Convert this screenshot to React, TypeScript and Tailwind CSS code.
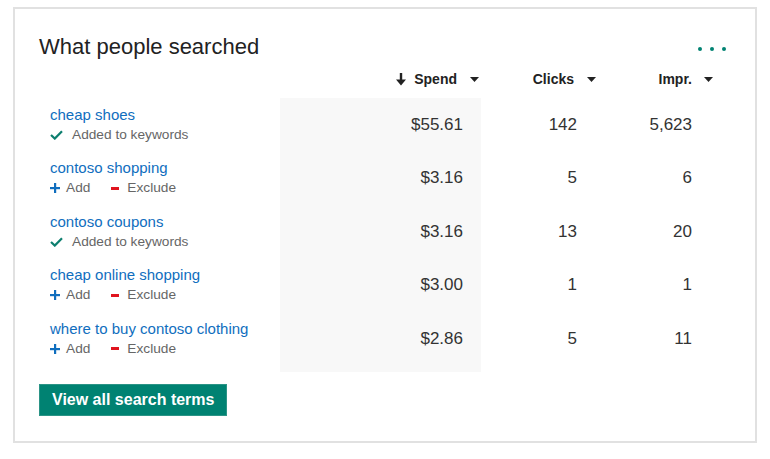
import React from "react";

type Term = {
  term: string;
  added: boolean;
  spend: string;
  clicks: string;
  impr: string;
};

const terms: Term[] = [
  { term: "cheap shoes", added: true, spend: "$55.61", clicks: "142", impr: "5,623" },
  { term: "contoso shopping", added: false, spend: "$3.16", clicks: "5", impr: "6" },
  { term: "contoso coupons", added: true, spend: "$3.16", clicks: "13", impr: "20" },
  { term: "cheap online shopping", added: false, spend: "$3.00", clicks: "1", impr: "1" },
  { term: "where to buy contoso clothing", added: false, spend: "$2.86", clicks: "5", impr: "11" },
];

const Caret = () => (
  <svg width="9" height="5" viewBox="0 0 9 5" className="shrink-0">
    <polygon points="0,0 9,0 4.5,5" fill="#222" />
  </svg>
);

const SortArrow = () => (
  <svg width="10" height="13" viewBox="0 0 10 13" className="shrink-0">
    <rect x="3.8" y="0" width="2.4" height="8" fill="#222" />
    <polygon points="0,6.5 10,6.5 5,12.5" fill="#222" />
  </svg>
);

const Check = () => (
  <svg width="13" height="10" viewBox="0 0 13 10" className="shrink-0">
    <polyline points="1,5 4.8,8.6 12,1.2" fill="none" stroke="#0d7f6f" strokeWidth="2.2" />
  </svg>
);

const Plus = () => (
  <svg width="10" height="10" viewBox="0 0 10 10" className="shrink-0">
    <rect x="4" y="0" width="2.2" height="10" fill="#106ebe" />
    <rect x="0" y="4" width="10" height="2.2" fill="#106ebe" />
  </svg>
);

const Minus = () => (
  <svg width="8" height="3" viewBox="0 0 8 3" className="shrink-0">
    <rect x="0" y="0" width="8" height="3" fill="#e0141e" />
  </svg>
);

const App = () => {
  return (
    <div className="w-[770px] h-[459px] bg-white pl-[13px] pt-[7px] font-['Liberation_Sans',Arial,sans-serif]">
      <div className="w-[744px] h-[436px] border-2 border-[#e1e1e1] bg-white pl-[24px] pt-[24px] pr-[29px] flex flex-col">
        <div className="flex justify-between items-center h-[26px]">
          <h2 className="mt-[2px] text-[22px] leading-[26px] text-[#222]">What people searched</h2>
          <div className="flex gap-[8px] mt-[6px]">
            <span className="w-[4px] h-[4px] rounded-full bg-[#008272]"></span>
            <span className="w-[4px] h-[4px] rounded-full bg-[#008272]"></span>
            <span className="w-[4px] h-[4px] rounded-full bg-[#008272]"></span>
          </div>
        </div>

        <div className="grid grid-cols-[241px_201px_120px_120px] grid-rows-[39px_repeat(5,53.4px)_7px] text-[#222]">
          {/* header */}
          <div></div>
          <div className="flex items-center justify-end pt-[2px] pr-[2px] text-[14px] font-bold">
            <SortArrow />
            <span className="ml-[8px]">Spend</span>
            <span className="ml-[13px]"><Caret /></span>
          </div>
          <div className="flex items-center justify-end pt-[2px] pr-[5px] text-[14px] font-bold">
            <span>Clicks</span>
            <span className="ml-[13px]"><Caret /></span>
          </div>
          <div className="flex items-center justify-end pt-[2px] pr-[8px] text-[14px] font-bold">
            <span>Impr.</span>
            <span className="ml-[12px]"><Caret /></span>
          </div>

          {terms.map((t) => (
            <React.Fragment key={t.term}>
              <div className="pl-[11px] pt-[8px]">
                <div className="text-[15px] leading-[18px] text-[#106ebe]">{t.term}</div>
                {t.added ? (
                  <div className="mt-[2px] flex items-center gap-[9px] text-[13.7px] leading-[18px] text-[#666]">
                    <Check />
                    <span>Added to keywords</span>
                  </div>
                ) : (
                  <div className="mt-[2px] flex items-center text-[13.7px] leading-[18px] text-[#666]">
                    <Plus />
                    <span className="ml-[6px]">Add</span>
                    <span className="ml-[21px]"><Minus /></span>
                    <span className="ml-[8px]">Exclude</span>
                  </div>
                )}
              </div>
              <div className="bg-[#f8f8f8] flex items-center justify-end pr-[18px] text-[17px] text-[#333]">
                {t.spend}
              </div>
              <div className="flex items-center justify-end pr-[24px] text-[17px] text-[#333]">{t.clicks}</div>
              <div className="flex items-center justify-end pr-[29px] text-[17px] text-[#333]">{t.impr}</div>
            </React.Fragment>
          ))}

          <div></div>
          <div className="bg-[#f8f8f8]"></div>
          <div></div>
          <div></div>
        </div>

        <div className="mt-[12px]">
          <button className="h-[32px] px-[12px] bg-[#008272] border border-[#2b9486] text-white text-[16px] font-bold">
            View all search terms
          </button>
        </div>
      </div>
    </div>
  );
};

export default App;
